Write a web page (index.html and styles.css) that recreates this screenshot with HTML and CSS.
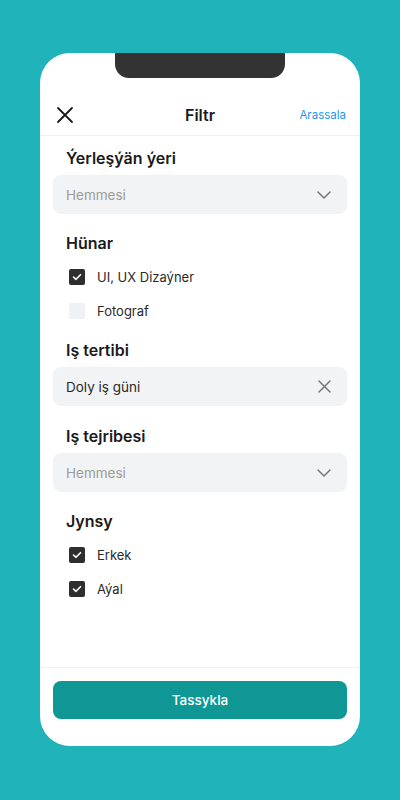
FILE: index.html
```html
<!DOCTYPE html>
<html lang="tk">
<head>
<meta charset="utf-8">
<title>Filtr</title>
<link rel="stylesheet" href="styles.css">
</head>
<body>
<div class="phone">
  <div class="notch"></div>
  <div class="header">
    <button class="icon-btn close" aria-label="Ýap">
      <svg width="18" height="18" viewBox="0 0 18 18"><path d="M2 2 L16 16 M16 2 L2 16" stroke="#1a1a1a" stroke-width="1.8" stroke-linecap="round" fill="none"/></svg>
    </button>
    <div class="title">Filtr</div>
    <a class="reset">Arassala</a>
  </div>
  <div class="content">
    <section class="sec s-loc">
      <h2>Ýerleşýän ýeri</h2>
      <div class="field">
        <span class="placeholder">Hemmesi</span>
        <svg class="chev" width="14" height="8" viewBox="0 0 14 8"><path d="M1 1 L7 7 L13 1" stroke="#777" stroke-width="1.5" fill="none" stroke-linecap="round" stroke-linejoin="round"/></svg>
      </div>
    </section>
    <section class="sec s-skill">
      <h2>Hünar</h2>
      <div class="checks">
        <label class="check"><span class="box on"><svg width="10" height="8" viewBox="0 0 10 8"><path d="M1.5 4 L4 6.3 L8.5 1.7" stroke="#fff" stroke-width="1.6" fill="none" stroke-linecap="round" stroke-linejoin="round"/></svg></span>UI, UX Dizaýner</label>
        <label class="check"><span class="box"></span>Fotograf</label>
      </div>
    </section>
    <section class="sec s-sched">
      <h2>Iş tertibi</h2>
      <div class="field">
        <span class="value">Doly iş güni</span>
        <svg class="clear" width="13" height="13" viewBox="0 0 13 13"><path d="M1 1 L12 12 M12 1 L1 12" stroke="#777" stroke-width="1.5" stroke-linecap="round" fill="none"/></svg>
      </div>
    </section>
    <section class="sec s-exp">
      <h2>Iş tejribesi</h2>
      <div class="field">
        <span class="placeholder">Hemmesi</span>
        <svg class="chev" width="14" height="8" viewBox="0 0 14 8"><path d="M1 1 L7 7 L13 1" stroke="#777" stroke-width="1.5" fill="none" stroke-linecap="round" stroke-linejoin="round"/></svg>
      </div>
    </section>
    <section class="sec s-gender">
      <h2>Jynsy</h2>
      <div class="checks">
        <label class="check"><span class="box on"><svg width="10" height="8" viewBox="0 0 10 8"><path d="M1.5 4 L4 6.3 L8.5 1.7" stroke="#fff" stroke-width="1.6" fill="none" stroke-linecap="round" stroke-linejoin="round"/></svg></span>Erkek</label>
        <label class="check"><span class="box on"><svg width="10" height="8" viewBox="0 0 10 8"><path d="M1.5 4 L4 6.3 L8.5 1.7" stroke="#fff" stroke-width="1.6" fill="none" stroke-linecap="round" stroke-linejoin="round"/></svg></span>Aýal</label>
      </div>
    </section>
  </div>
  <div class="footer">
    <button class="submit">Tassykla</button>
  </div>
</div>
</body>
</html>
```
FILE: styles.css
```css
* { box-sizing: border-box; }
html, body { margin: 0; padding: 0; }
body {
  background: #20b3b9;
  font-family: Inter, "Noto Sans", sans-serif;
  color: #1a1a1a;
  width: 400px;
  height: 800px;
  overflow: hidden;
}
.phone {
  position: relative;
  width: 320px;
  height: 693px;
  margin: 53px 0 0 40px;
  background: #fff;
  border-radius: 30px;
  display: flex;
  flex-direction: column;
  overflow: hidden;
}
.notch {
  position: absolute;
  left: 75px;
  top: 0;
  width: 170px;
  height: 25px;
  background: #333;
  border-radius: 0 0 14px 14px;
}
.header {
  margin-top: 42px;
  height: 41px;
  border-bottom: 1px solid #efefef;
  display: flex;
  align-items: center;
  justify-content: space-between;
  padding: 0 14px 0 16px;
  position: relative;
}
.icon-btn {
  border: 0;
  background: none;
  padding: 0;
  width: 18px;
  height: 18px;
  display: flex;
}
.title {
  position: absolute;
  left: 0;
  right: 0;
  text-align: center;
  font-size: 16px;
  font-weight: 600;
  pointer-events: none;
}
.reset {
  font-size: 11.5px;
  color: #2196f3;
}
.content {
  flex: 1;
  padding: 11px 13px 0;
}
.sec h2 {
  margin: 0 0 6px;
  font-size: 16px;
  line-height: 22px;
  font-weight: 600;
  padding-left: 13px;
}
.s-loc { margin-bottom: 18px; }
.s-skill { margin-bottom: 11px; }
.s-sched { margin-bottom: 19px; }
.s-exp { margin-bottom: 18px; }
.field {
  height: 39px;
  background: #f2f3f5;
  border-radius: 8px;
  display: flex;
  align-items: center;
  justify-content: space-between;
  padding: 0 16px 0 13px;
  font-size: 13.5px;
}
.placeholder { color: #9b9b9b; }
.value { color: #2a2a2a; }
.checks {
  display: flex;
  flex-direction: column;
  padding-left: 16px;
}
.check {
  height: 34px;
  display: flex;
  align-items: center;
  gap: 12px;
  font-size: 13px;
  color: #2a2a2a;
}
.box {
  width: 16px;
  height: 16px;
  border-radius: 2px;
  background: #f0f1f3;
  display: flex;
  align-items: center;
  justify-content: center;
  flex: none;
}
.box.on { background: #2e2e2e; }
.footer {
  border-top: 1px solid #efefef;
  padding: 13px 13px 27px;
}
.submit {
  width: 100%;
  height: 38px;
  border: 0;
  border-radius: 8px;
  background: #0e9794;
  color: #fff;
  font-family: Inter, "Noto Sans", sans-serif;
  font-size: 13.5px;
  font-weight: 500;
}
```
